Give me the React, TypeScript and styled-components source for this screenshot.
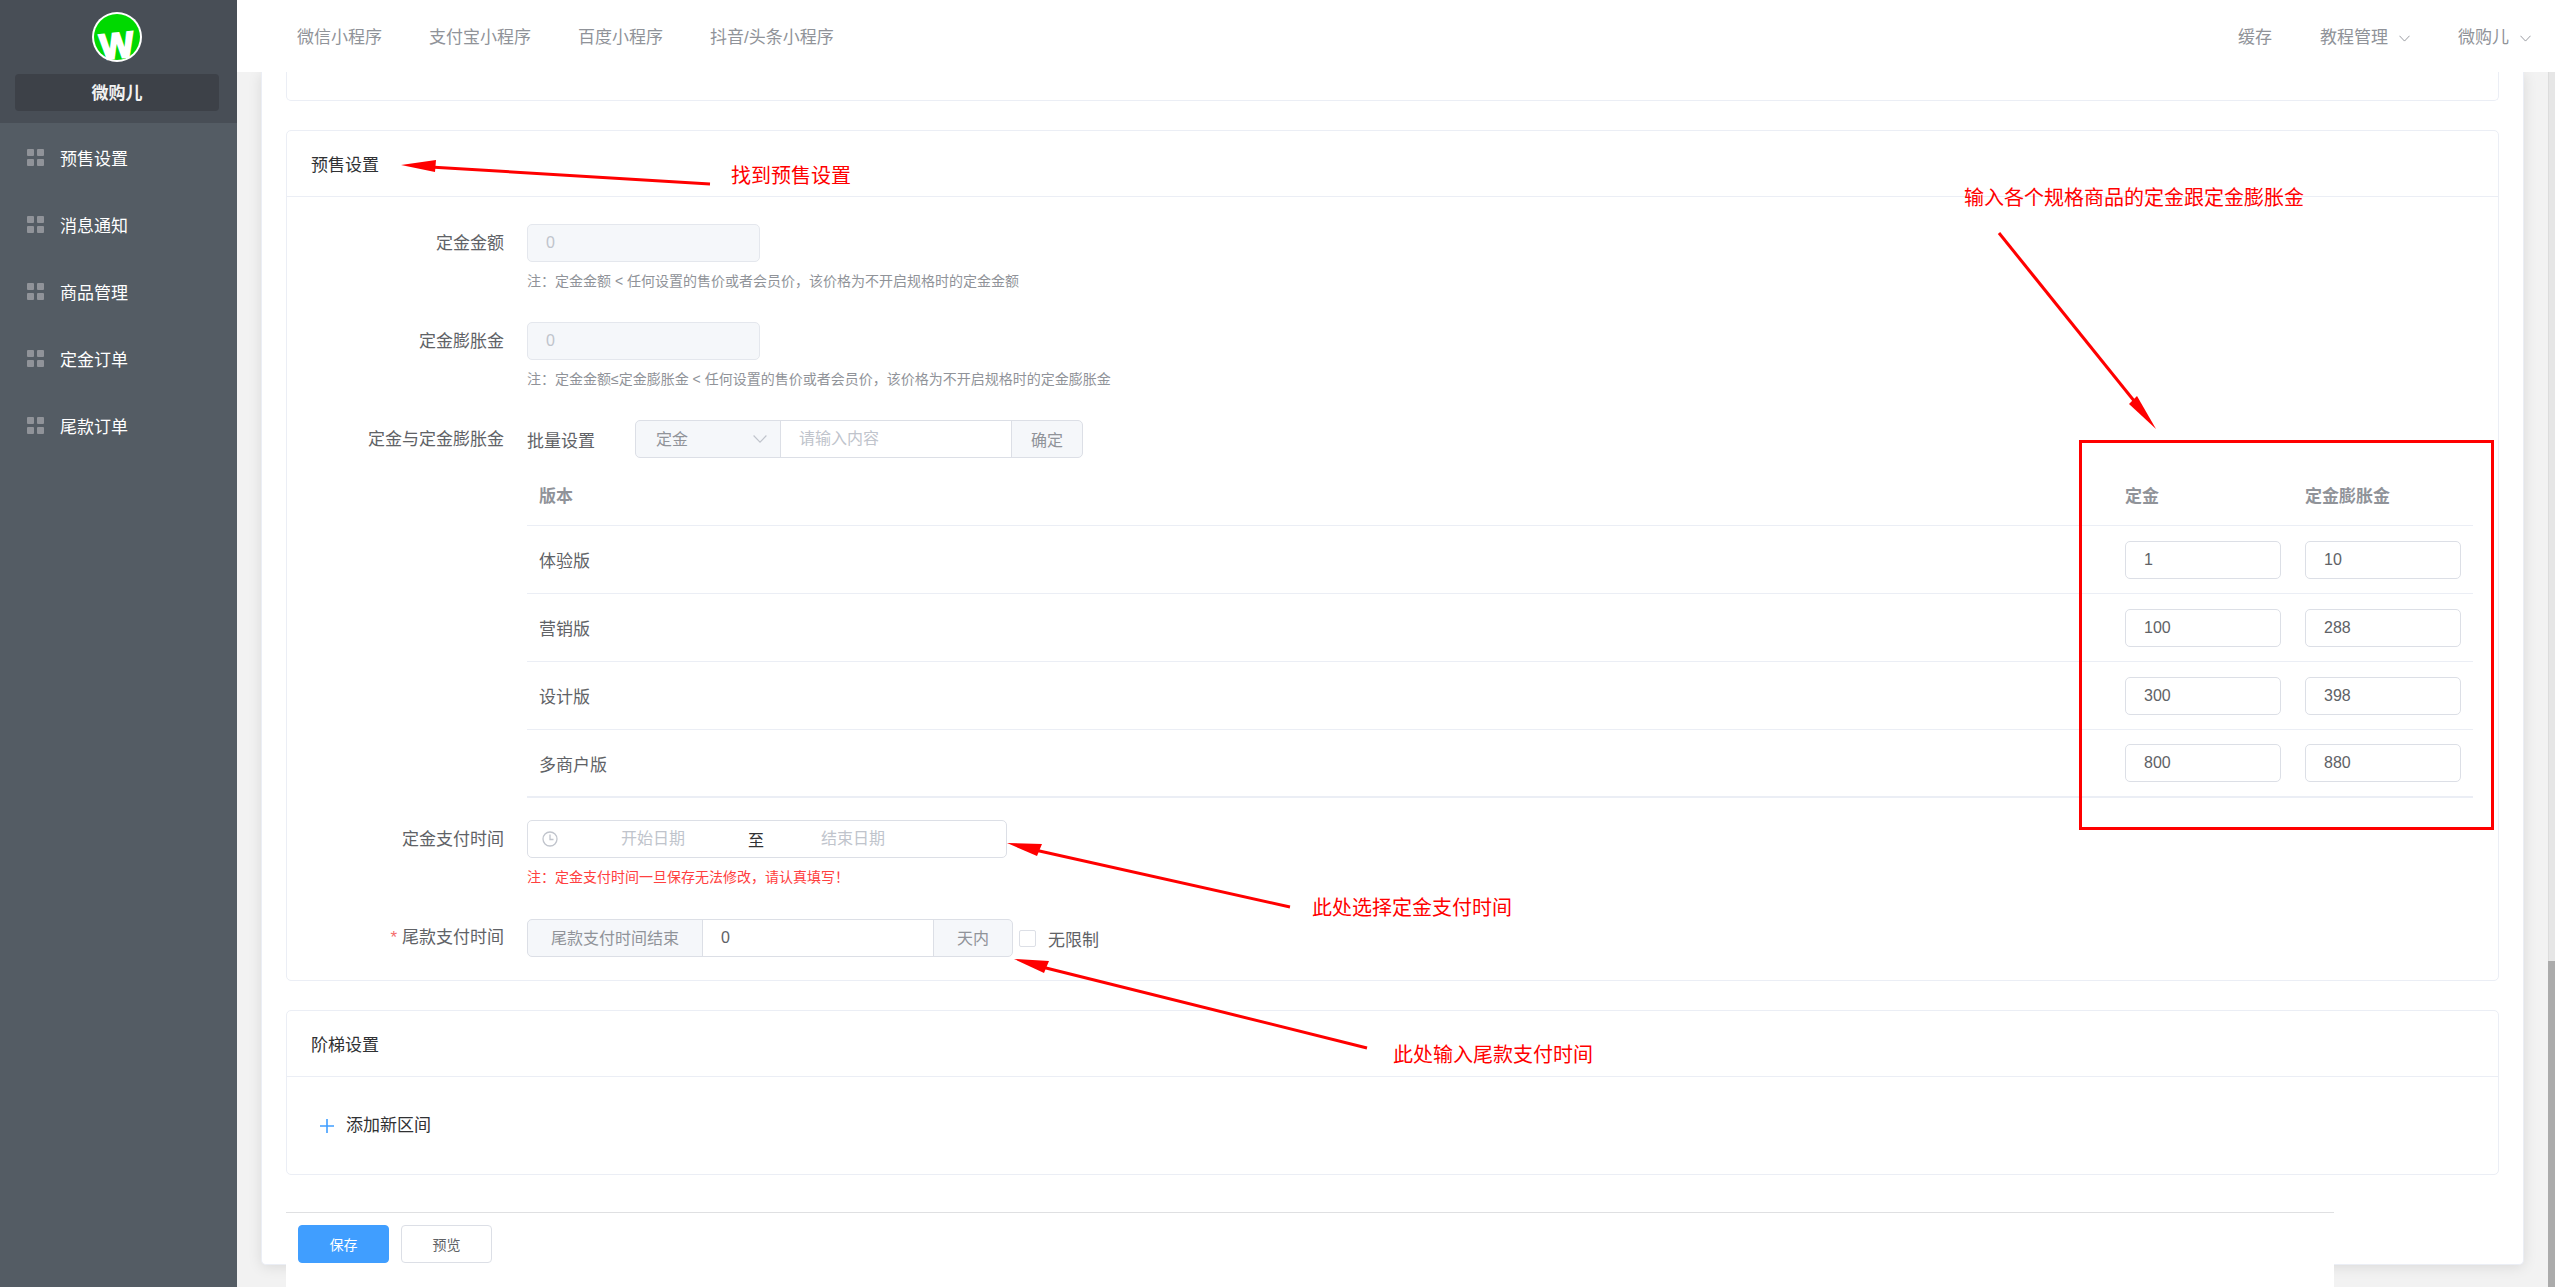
import React from "react";
import styled, { createGlobalStyle, css } from "styled-components";

const fontStack = `"Liberation Sans", "Noto Sans CJK SC", sans-serif`;

const colors = {
  text: "#303133",
  regular: "#606266",
  muted: "#909399",
  placeholder: "#c0c4cc",
  line: "#ebeef5",
  border: "#dcdfe6",
  fill: "#f5f7fa",
  primary: "#409eff",
  danger: "#ff4040",
  mark: "#ff0000",
};

const GlobalStyle = createGlobalStyle`
  *, *::before, *::after { box-sizing: border-box; }
  body { margin: 0; font-family: ${fontStack}; font-size: 17px; color: ${colors.text}; }
  button, input, select { font-family: inherit; margin: 0; }
  input::placeholder { color: ${colors.placeholder}; opacity: 1; }
`;

const Shell = styled.div`
  position: relative;
  display: flex;
  height: 100vh;
  overflow: hidden;
  background: #f2f2f2;
`;

/* ---------- sidebar ---------- */

const Sidebar = styled.aside`
  flex: 0 0 237px;
  background: #545c64;
`;

const Brand = styled.div`
  display: flex;
  flex-direction: column;
  align-items: center;
  gap: 12px;
  padding: 12px 18px 12px 15px;
  background: #484e56;
`;

const BrandName = styled.div`
  align-self: stretch;
  height: 37px;
  border-radius: 4px;
  background: #3d4148;
  color: #f2f2f2;
  font-weight: 700;
  line-height: 40px;
  text-align: center;
`;

const SideMenu = styled.nav`
  display: flex;
  flex-direction: column;
  padding-top: 1px;
`;

const SideLink = styled.a`
  display: flex;
  align-items: center;
  gap: 16px;
  height: 67px;
  padding-left: 27px;
  color: #fff;
  text-decoration: none;
`;

/* ---------- header ---------- */

const Main = styled.div`
  display: flex;
  flex: 1;
  flex-direction: column;
  min-width: 0;
`;

const Header = styled.header`
  display: flex;
  flex: 0 0 72px;
  align-items: center;
  justify-content: space-between;
  padding: 4px 24px 0 60px;
  background: #fff;
`;

const NavGroup = styled.nav<{ $gap: number }>`
  display: flex;
  align-items: center;
  gap: ${(p) => p.$gap}px;
`;

const NavLink = styled.a`
  display: flex;
  align-items: center;
  gap: 11px;
  color: ${colors.muted};
  line-height: 24px;
  text-decoration: none;
`;

/* ---------- page ---------- */

const Viewport = styled.div`
  position: relative;
  display: flex;
  flex: 1;
  min-height: 0;
`;

const Scroller = styled.main`
  flex: 1;
  min-width: 0;
  overflow: hidden;
  padding: 0 24px;
`;

const ScrollTrack = styled.div`
  display: flex;
  flex: 0 0 7px;
  flex-direction: column;
  justify-content: flex-end;
  border-left: 1px solid #dcdcdc;
  background: #e6e6e6;
`;

const ScrollThumb = styled.div`
  height: 26.8%;
  margin-left: -1px;
  background: #ababab;
`;

const Sheet = styled.div`
  display: flex;
  flex-direction: column;
  gap: 29px;
  padding: 0 24px 89px;
  border: 1px solid ${colors.line};
  border-top: 0;
  border-radius: 0 0 5px 5px;
  background: #fff;
  box-shadow: 0 2px 14px rgba(0, 0, 0, 0.1);
`;

const Panel = styled.section<{ $tail?: boolean }>`
  border: 1px solid ${colors.line};
  border-radius: 5px;
  ${(p) =>
    p.$tail &&
    css`
      height: 29px;
      border-top: 0;
      border-radius: 0 0 5px 5px;
    `}
`;

const PanelTitle = styled.h2`
  height: 66px;
  margin: 0;
  padding: 0 24px;
  border-bottom: 1px solid ${colors.line};
  font-size: 17px;
  font-weight: 400;
  line-height: 69px;
`;

const Form = styled.form`
  padding: 27px 25px 0 0;
`;

const FormRow = styled.div`
  display: grid;
  grid-template-columns: 217px 1fr;
  column-gap: 23px;
  margin-bottom: 22px;
`;

const Label = styled.label`
  color: ${colors.regular};
  line-height: 40px;
  text-align: right;
`;

const Required = styled.span`
  margin-right: 5px;
  color: #f56c6c;
`;

const Field = styled.div`
  min-width: 0;
`;

const Note = styled.p<{ $warn?: boolean }>`
  margin: 0;
  color: ${(p) => (p.$warn ? colors.danger : colors.muted)};
  font-size: 14px;
  line-height: 38px;
`;

const TextInput = styled.input<{ $width: string }>`
  width: ${(p) => p.$width};
  height: 38px;
  padding: 0 18px;
  border: 1px solid ${colors.border};
  border-radius: 5px;
  outline: none;
  background: #fff;
  color: ${colors.regular};
  font-size: 16px;
  &:disabled {
    border-color: #e4e7ed;
    background: ${colors.fill};
    color: ${colors.placeholder};
  }
`;

const Inline = styled.div<{ $gap: number }>`
  display: flex;
  align-items: center;
  gap: ${(p) => p.$gap}px;
  color: ${colors.regular};
`;

const Group = styled.div`
  display: flex;
  height: 38px;
  overflow: hidden;
  border: 1px solid ${colors.border};
  border-radius: 5px;
  background: ${colors.fill};
  color: ${colors.muted};
  font-size: 16px;
  line-height: 38px;
`;

const GroupInput = styled.input`
  width: 232px;
  padding: 0 18px;
  border: 0;
  border-left: 1px solid ${colors.border};
  border-right: 1px solid ${colors.border};
  outline: none;
  background: #fff;
  color: ${colors.regular};
  font-size: 16px;
`;

const GroupText = styled.span`
  padding: 0 23px;
`;

const GroupButton = styled.button`
  padding: 0 19px;
  border: 0;
  background: none;
  color: ${colors.muted};
  font-size: 16px;
`;

const SelectBox = styled.div`
  display: grid;
  width: 144px;
  align-items: center;
  > * {
    grid-area: 1 / 1;
  }
  > svg {
    justify-self: end;
    margin-right: 13px;
    pointer-events: none;
  }
`;

const Select = styled.select`
  height: 36px;
  padding: 0 20px;
  border: 0;
  outline: none;
  appearance: none;
  background: none;
  color: ${colors.muted};
  font-size: 16px;
`;

const PriceTable = styled.table`
  width: 100%;
  border-collapse: separate;
  border-spacing: 0;
  table-layout: fixed;
  color: ${colors.regular};
  text-align: left;
  th,
  td {
    height: 68px;
    padding: 0 12px;
    border-bottom: 1px solid ${colors.line};
  }
  th {
    padding-top: 5px;
    color: ${colors.muted};
    font-weight: 700;
  }
  tr:last-child td {
    border-bottom-width: 2px;
  }
`;

const PriceCol = styled.col`
  width: 180px;
`;

const DateRange = styled.div`
  display: flex;
  align-items: center;
  width: 480px;
  height: 38px;
  padding-left: 14px;
  border: 1px solid ${colors.border};
  border-radius: 5px;
  font-size: 16px;
  > svg {
    margin-right: 8px;
  }
`;

const DateInput = styled.input`
  width: 174px;
  padding: 0;
  border: 0;
  outline: none;
  background: none;
  font-size: 16px;
  text-align: center;
`;

const DateJoin = styled.span`
  width: 26px;
  padding-right: 2px;
  text-align: right;
`;

const CheckLabel = styled.label`
  display: flex;
  align-items: center;
  gap: 12px;
`;

const Check = styled.input`
  width: 17px;
  height: 17px;
  border: 1px solid ${colors.border};
  border-radius: 2px;
  appearance: none;
  background: #fff;
`;

const PanelBody = styled.div`
  padding: 36px 33px;
`;

const AddButton = styled.button`
  display: flex;
  align-items: center;
  gap: 12px;
  padding: 0;
  border: 0;
  background: none;
  color: ${colors.text};
  font-size: 17px;
  line-height: 25px;
`;

const ActionBar = styled.footer`
  position: absolute;
  bottom: 0;
  left: 49px;
  right: 221px;
  display: flex;
  gap: 12px;
  height: 75px;
  padding: 12px;
  border-top: 1px solid #dfe0e2;
  background: #fff;
`;

const ActionButton = styled.button<{ $primary?: boolean }>`
  width: 91px;
  height: 38px;
  border: 1px solid ${(p) => (p.$primary ? colors.primary : colors.border)};
  border-radius: 4px;
  background: ${(p) => (p.$primary ? colors.primary : "#fff")};
  color: ${(p) => (p.$primary ? "#fff" : colors.regular)};
  font-size: 14px;
`;

/* ---------- tutorial marks laid over the page ---------- */

const MarkText = styled.span<{ $top: number; $left?: number; $right?: number }>`
  position: absolute;
  top: ${(p) => p.$top}px;
  ${(p) => (p.$left !== undefined ? `left: ${p.$left}px;` : `right: ${p.$right}px;`)}
  color: ${colors.mark};
  font-size: 20px;
  line-height: 28px;
  white-space: nowrap;
`;

const MarkFrame = styled.div`
  position: absolute;
  top: 440px;
  right: 61px;
  width: 415px;
  height: 390px;
  border: 3px solid ${colors.mark};
  pointer-events: none;
`;

const MarkArrows = styled.svg<{ $side: "left" | "right" }>`
  position: absolute;
  top: 0;
  ${(p) => p.$side}: 0;
  pointer-events: none;
`;

/* ---------- drawings ---------- */

const LogoSvg = styled.svg`
  overflow: visible;
`;

const Logo = () => (
  <LogoSvg width="50" height="50" viewBox="0 0 50 50" aria-hidden="true">
    <circle cx="25" cy="25" r="25" fill="#fff" />
    <circle cx="25" cy="25" r="23" fill="#00d900" />
    <text
      x="25"
      y="46"
      transform="rotate(-6 25 35)"
      textAnchor="middle"
      fontFamily="Liberation Sans, sans-serif"
      fontWeight="700"
      fontSize="36"
      fill="#fff"
      stroke="#fff"
      strokeWidth="2"
    >
      W
    </text>
  </LogoSvg>
);

const GridIcon = () => (
  <svg width="17" height="17" viewBox="0 0 17 17" fill="#909399" aria-hidden="true">
    <rect width="7" height="7" rx="1" />
    <rect x="10" width="7" height="7" rx="1" />
    <rect y="10" width="7" height="7" rx="1" />
    <rect x="10" y="10" width="7" height="7" rx="1" />
  </svg>
);

const Chevron = ({ size = 11, color = colors.muted }: { size?: number; color?: string }) => (
  <svg width={size} height={size} viewBox="0 0 12 12" fill="none" stroke={color} aria-hidden="true">
    <path d="M0.5 3 L6 8.8 L11.5 3" />
  </svg>
);

const Clock = () => (
  <svg width="16" height="16" viewBox="0 0 16 16" fill="none" stroke={colors.placeholder} aria-hidden="true">
    <circle cx="8" cy="8" r="7" strokeWidth="1.3" />
    <path d="M8 3.5 V8.5 H11.5" strokeWidth="1.3" />
  </svg>
);

const Plus = () => (
  <svg width="14" height="14" viewBox="0 0 14 14" stroke={colors.primary} strokeWidth="1.6" aria-hidden="true">
    <path d="M0 7 H14 M7 0 V14" />
  </svg>
);

const menu = ["预售设置", "消息通知", "商品管理", "定金订单", "尾款订单"];
const platforms = ["微信小程序", "支付宝小程序", "百度小程序", "抖音/头条小程序"];
const versions = [
  { name: "体验版", deposit: "1", boost: "10" },
  { name: "营销版", deposit: "100", boost: "288" },
  { name: "设计版", deposit: "300", boost: "398" },
  { name: "多商户版", deposit: "800", boost: "880" },
];

export default function App() {
  return (
    <>
      <GlobalStyle />
      <Shell>
        <Sidebar>
          <Brand>
            <Logo />
            <BrandName>微购儿</BrandName>
          </Brand>
          <SideMenu>
            {menu.map((item) => (
              <SideLink href="#" key={item}>
                <GridIcon />
                {item}
              </SideLink>
            ))}
          </SideMenu>
        </Sidebar>

        <Main>
          <Header>
            <NavGroup $gap={47}>
              {platforms.map((item) => (
                <NavLink href="#" key={item}>
                  {item}
                </NavLink>
              ))}
            </NavGroup>
            <NavGroup $gap={48}>
              <NavLink href="#">缓存</NavLink>
              <NavLink href="#">
                教程管理
                <Chevron />
              </NavLink>
              <NavLink href="#">
                微购儿
                <Chevron />
              </NavLink>
            </NavGroup>
          </Header>

          <Viewport>
            <Scroller>
              <Sheet>
                <Panel $tail />

                <Panel>
                  <PanelTitle>预售设置</PanelTitle>
                  <Form onSubmit={(e) => e.preventDefault()}>
                    <FormRow>
                      <Label htmlFor="deposit">定金金额</Label>
                      <Field>
                        <TextInput id="deposit" $width="233px" defaultValue="0" disabled />
                        <Note>注：定金金额 &lt; 任何设置的售价或者会员价，该价格为不开启规格时的定金金额</Note>
                      </Field>
                    </FormRow>
                    <FormRow>
                      <Label htmlFor="boost">定金膨胀金</Label>
                      <Field>
                        <TextInput id="boost" $width="233px" defaultValue="0" disabled />
                        <Note>注：定金金额≤定金膨胀金 &lt; 任何设置的售价或者会员价，该价格为不开启规格时的定金膨胀金</Note>
                      </Field>
                    </FormRow>
                    <FormRow>
                      <Label htmlFor="batch-value">定金与定金膨胀金</Label>
                      <Field>
                        <Inline $gap={40}>
                          <label htmlFor="batch-kind">批量设置</label>
                          <Group>
                            <SelectBox>
                              <Select id="batch-kind" defaultValue="定金">
                                <option>定金</option>
                                <option>定金膨胀金</option>
                              </Select>
                              <Chevron size={14} color={colors.placeholder} />
                            </SelectBox>
                            <GroupInput id="batch-value" placeholder="请输入内容" />
                            <GroupButton type="button">确定</GroupButton>
                          </Group>
                        </Inline>
                        <PriceTable>
                          <colgroup>
                            <col />
                            <PriceCol />
                            <PriceCol />
                          </colgroup>
                          <thead>
                            <tr>
                              <th>版本</th>
                              <th>定金</th>
                              <th>定金膨胀金</th>
                            </tr>
                          </thead>
                          <tbody>
                            {versions.map((v) => (
                              <tr key={v.name}>
                                <td>{v.name}</td>
                                <td>
                                  <TextInput $width="100%" defaultValue={v.deposit} aria-label={`${v.name} 定金`} />
                                </td>
                                <td>
                                  <TextInput $width="100%" defaultValue={v.boost} aria-label={`${v.name} 定金膨胀金`} />
                                </td>
                              </tr>
                            ))}
                          </tbody>
                        </PriceTable>
                      </Field>
                    </FormRow>
                    <FormRow>
                      <Label htmlFor="pay-start">定金支付时间</Label>
                      <Field>
                        <DateRange>
                          <Clock />
                          <DateInput id="pay-start" placeholder="开始日期" />
                          <DateJoin>至</DateJoin>
                          <DateInput placeholder="结束日期" aria-label="结束日期" />
                        </DateRange>
                        <Note $warn>注：定金支付时间一旦保存无法修改，请认真填写！</Note>
                      </Field>
                    </FormRow>
                    <FormRow>
                      <Label htmlFor="final-days">
                        <Required>*</Required>尾款支付时间
                      </Label>
                      <Inline $gap={6}>
                        <Group>
                          <GroupText>尾款支付时间结束</GroupText>
                          <GroupInput id="final-days" defaultValue="0" />
                          <GroupText>天内</GroupText>
                        </Group>
                        <CheckLabel>
                          <Check type="checkbox" />
                          无限制
                        </CheckLabel>
                      </Inline>
                    </FormRow>
                  </Form>
                </Panel>

                <Panel>
                  <PanelTitle>阶梯设置</PanelTitle>
                  <PanelBody>
                    <AddButton type="button">
                      <Plus />
                      添加新区间
                    </AddButton>
                  </PanelBody>
                </Panel>
              </Sheet>
            </Scroller>
            <ScrollTrack>
              <ScrollThumb />
            </ScrollTrack>
            <ActionBar>
              <ActionButton $primary type="button">
                保存
              </ActionButton>
              <ActionButton type="button">预览</ActionButton>
            </ActionBar>
          </Viewport>
        </Main>

        <MarkArrows $side="left" width="1400" height="1080" fill={colors.mark} stroke={colors.mark}>
          <path d="M710 184 L430 167" strokeWidth="3" />
          <path d="M401 165 L436 160 L435 172 Z" stroke="none" />
          <path d="M1290 907 L1035 850" strokeWidth="3" />
          <path d="M1007 843 L1042 844 L1037 856 Z" stroke="none" />
          <path d="M1367 1048 L1042 967" strokeWidth="3" />
          <path d="M1014 959 L1049 961 L1044 973 Z" stroke="none" />
        </MarkArrows>
        <MarkArrows $side="right" width="600" height="440" fill={colors.mark} stroke={colors.mark}>
          <path d="M44 233 L180 402" strokeWidth="3" />
          <path d="M201 429 L174 404 L182 396 Z" stroke="none" />
        </MarkArrows>
        <MarkFrame />
        <MarkText $top={162} $left={731}>找到预售设置</MarkText>
        <MarkText $top={184} $right={251}>输入各个规格商品的定金跟定金膨胀金</MarkText>
        <MarkText $top={894} $left={1312}>此处选择定金支付时间</MarkText>
        <MarkText $top={1041} $left={1393}>此处输入尾款支付时间</MarkText>
      </Shell>
    </>
  );
}
